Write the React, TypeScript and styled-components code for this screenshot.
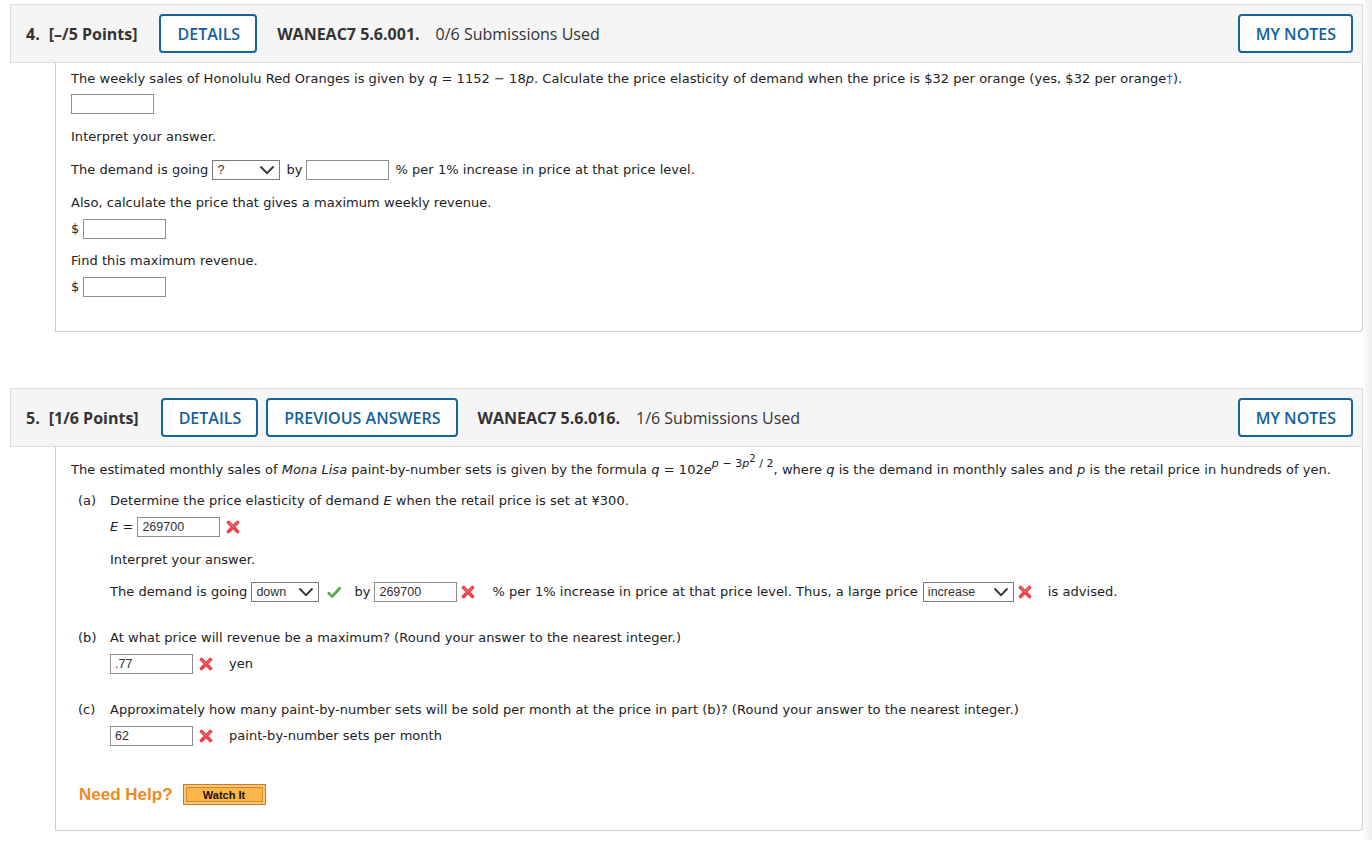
import React from 'react'
import styled, { createGlobalStyle } from 'styled-components'

const GlobalStyle = createGlobalStyle`
  html, body {
    margin: 0;
    padding: 0;
    background: #fff;
  }
  body {
    font-family: 'DejaVu Sans', Verdana, sans-serif;
    color: #222;
  }
`

const Page = styled.div`
  padding: 4px 9px 0 10px;
  min-height: 840px;
  box-sizing: border-box;
  background: linear-gradient(to right, #fff calc(100% - 10px), #ececec 100%);
`

const Question = styled.section<{ $gap?: number }>`
  margin-top: ${(p) => p.$gap ?? 0}px;
`

const Header = styled.div`
  display: flex;
  align-items: center;
  height: 57px;
  padding: 0 9px 0 15px;
  background: #f5f5f5;
  border: 1px solid #dcdcdc;
  font-family: 'Open Sans', 'Liberation Sans', sans-serif;
  font-size: 16px;
  color: #333;
`

const Num = styled.span`
  font-weight: 700;
  margin-right: 9px;
`

const Points = styled.span`
  font-weight: 700;
  margin-right: 22px;
`

const OutlineButton = styled.button<{ $mr?: number }>`
  height: 39px;
  padding: 0 15px 0 16px;
  margin-right: ${(p) => p.$mr ?? 20}px;
  background: #fff;
  border: 2px solid #15669b;
  border-radius: 4px;
  color: #15609a;
  font-family: 'Open Sans', 'Liberation Sans', sans-serif;
  font-size: 16px;
  font-weight: 600;
  cursor: pointer;
  &:last-child {
    margin-right: 0;
  }
`

const Code = styled.span`
  font-weight: 700;
  margin-right: 16px;
`

const Subs = styled.span`
  flex: 1;
`

const Body = styled.div<{ $pt: number; $pb: number }>`
  margin-left: 45px;
  padding: ${(p) => p.$pt}px 15px ${(p) => p.$pb}px 15px;
  border: 1px solid #cfcfcf;
  border-top: none;
  border-radius: 0 0 4px 0;
  font-size: 13px;
  letter-spacing: 0.04px;
`

const Line = styled.div<{ $mt?: number; $h?: number }>`
  margin-top: ${(p) => p.$mt ?? 0}px;
  height: ${(p) => p.$h ?? 16}px;
  line-height: ${(p) => p.$h ?? 16}px;
  white-space: nowrap;
  display: flex;
  align-items: center;
`

const Box = styled.span<{ $w?: number }>`
  display: inline-flex;
  align-items: center;
  box-sizing: border-box;
  width: ${(p) => p.$w ?? 83}px;
  height: 20px;
  padding: 0 4px;
  border: 1px solid #8d8d8d;
  background: #fff;
  font-family: 'Liberation Sans', Arial, sans-serif;
  font-size: 12.5px;
  letter-spacing: 0;
  color: #333;
`

const SelectBox = styled(Box)`
  justify-content: space-between;
  padding: 0 4px 0 4px;
  border-color: #7a7a7a;
`

const Space = styled.span<{ $w: number }>`
  display: inline-block;
  width: ${(p) => p.$w}px;
`

const I = styled.i`
  font-style: italic;
`

const Sup = styled.span`
  position: relative;
  top: -6px;
  font-size: 11px;
  line-height: 0;
`

const SupSup = styled.span`
  position: relative;
  top: -5px;
  font-size: 10px;
`

const Dagger = styled.span`
  color: #2f5fe8;
`

const Parts = styled.div`
  padding-left: 7px;
`

const Part = styled.div<{ $mt?: number }>`
  margin-top: ${(p) => p.$mt ?? 0}px;
`

const Label = styled.span`
  display: inline-block;
  width: 32px;
`

const Indent = styled.div`
  padding-left: 32px;
`

const HelpRow = styled.div`
  margin-top: 38px;
  padding-left: 8px;
  display: flex;
  align-items: center;
  gap: 10px;
`

const HelpText = styled.span`
  font-family: 'Liberation Sans', Arial, sans-serif;
  font-size: 17px;
  font-weight: 700;
  letter-spacing: 0;
  color: #ef8a23;
`

const WatchButton = styled.button`
  width: 83px;
  height: 21px;
  padding: 0;
  background: #ffb547;
  border: 1px solid #d0782a;
  box-shadow: inset 0 0 0 2px #ffc870, inset 0 0 0 3px #c98a3a;
  font-family: 'Liberation Sans', Arial, sans-serif;
  font-size: 11px;
  font-weight: 700;
  color: #111;
`

const Chevron = () => (
  <svg width="16" height="10" viewBox="0 0 16 10">
    <path d="M1.5 1.5 L8 8.2 L14.5 1.5" fill="none" stroke="#333" strokeWidth="1.8" />
  </svg>
)

const Select = ({ value, w }: { value: string; w: number }) => (
  <SelectBox $w={w}>
    <span>{value}</span>
    <Chevron />
  </SelectBox>
)

const Mark = styled.svg`
  flex: none;
`

const XMark = () => (
  <Mark width="14" height="14" viewBox="0 0 14 14">
    <path d="M2.5 2.5 L11.5 11.5 M11.5 2.5 L2.5 11.5" stroke="#e8454c" strokeWidth="3.6" strokeLinecap="round" />
    <path d="M3 3 L7 7 M11 3 L7 7" stroke="#f27a7f" strokeWidth="1" strokeLinecap="round" />
  </Mark>
)

const Check = () => (
  <Mark width="14" height="13" viewBox="0 0 14 13">
    <path d="M1.8 7.2 L5.2 10.6 L12.6 2.2" fill="none" stroke="#55a84b" strokeWidth="2.8" strokeLinecap="round" strokeLinejoin="round" />
    <path d="M2.5 7.2 L5.2 9.8" fill="none" stroke="#8fd17f" strokeWidth="0.8" strokeLinecap="round" />
  </Mark>
)

export default function App() {
  return (
    <>
      <GlobalStyle />
      <Page>
        <Question>
          <Header>
            <Num>4.</Num>
            <Points>[–/5 Points]</Points>
            <OutlineButton>DETAILS</OutlineButton>
            <Code>WANEAC7 5.6.001.</Code>
            <Subs>0/6 Submissions Used</Subs>
            <OutlineButton>MY NOTES</OutlineButton>
          </Header>
          <Body $pt={8} $pb={34}>
            <Line>
              The weekly sales of Honolulu Red Oranges is given by&nbsp;<I>q</I>&nbsp;= 1152 − 18<I>p</I>. Calculate the
              price elasticity of demand when the price is $32 per orange (yes, $32 per orange<Dagger>†</Dagger>).
            </Line>
            <Line $mt={7} $h={20}>
              <Box />
            </Line>
            <Line $mt={15}>Interpret your answer.</Line>
            <Line $mt={15} $h={20}>
              The demand is going<Space $w={4} />
              <Select value="?" w={68} />
              <Space $w={6} />
              by<Space $w={4} />
              <Box />
              <Space $w={6} />% per 1% increase in price at that price level.
            </Line>
            <Line $mt={15}>Also, calculate the price that gives a maximum weekly revenue.</Line>
            <Line $mt={8} $h={20}>
              $<Space $w={4} />
              <Box />
            </Line>
            <Line $mt={14}>Find this maximum revenue.</Line>
            <Line $mt={8} $h={20}>
              $<Space $w={4} />
              <Box />
            </Line>
          </Body>
        </Question>

        <Question $gap={56}>
          <Header>
            <Num>5.</Num>
            <Points>[1/6 Points]</Points>
            <OutlineButton $mr={8}>DETAILS</OutlineButton>
            <OutlineButton>PREVIOUS ANSWERS</OutlineButton>
            <Code>WANEAC7 5.6.016.</Code>
            <Subs>1/6 Submissions Used</Subs>
            <OutlineButton>MY NOTES</OutlineButton>
          </Header>
          <Body $pt={15} $pb={25}>
            <Line>
              The estimated monthly sales of&nbsp;<I>Mona Lisa</I>&nbsp;paint-by-number sets is given by the formula&nbsp;
              <I>q</I>&nbsp;= 102<I>e</I>
              <Sup>
                <I>p</I> − 3<I>p</I>
                <SupSup>2</SupSup> / 2
              </Sup>
              , where&nbsp;<I>q</I>&nbsp;is the demand in monthly sales and&nbsp;<I>p</I>&nbsp;is the retail price in
              hundreds of yen.
            </Line>
            <Parts>
              <Part $mt={15}>
                <Line>
                  <Label>(a)</Label>Determine the price elasticity of demand&nbsp;<I>E</I>&nbsp;when the retail price is
                  set at ¥300.
                </Line>
                <Indent>
                  <Line $mt={8} $h={20}>
                    <I>E</I>&nbsp;=<Space $w={4} />
                    <Box>269700</Box>
                    <Space $w={6} />
                    <XMark />
                  </Line>
                  <Line $mt={15}>Interpret your answer.</Line>
                  <Line $mt={14} $h={20}>
                    The demand is going<Space $w={4} />
                    <Select value="down" w={68} />
                    <Space $w={8} />
                    <Check />
                    <Space $w={13} />
                    by<Space $w={4} />
                    <Box>269700</Box>
                    <Space $w={4} />
                    <XMark />
                    <Space $w={17} />% per 1% increase in price at that price level. Thus, a large price
                    <Space $w={5} />
                    <Select value="increase" w={91} />
                    <Space $w={4} />
                    <XMark />
                    <Space $w={16} />
                    is advised.
                  </Line>
                </Indent>
              </Part>
              <Part $mt={28}>
                <Line>
                  <Label>(b)</Label>At what price will revenue be a maximum? (Round your answer to the nearest integer.)
                </Line>
                <Indent>
                  <Line $mt={8} $h={20}>
                    <Box>.77</Box>
                    <Space $w={6} />
                    <XMark />
                    <Space $w={16} />
                    yen
                  </Line>
                </Indent>
              </Part>
              <Part $mt={28}>
                <Line>
                  <Label>(c)</Label>Approximately how many paint-by-number sets will be sold per month at the price in
                  part (b)? (Round your answer to the nearest integer.)
                </Line>
                <Indent>
                  <Line $mt={8} $h={20}>
                    <Box>62</Box>
                    <Space $w={6} />
                    <XMark />
                    <Space $w={16} />
                    paint-by-number sets per month
                  </Line>
                </Indent>
              </Part>
            </Parts>
            <HelpRow>
              <HelpText>Need Help?</HelpText>
              <WatchButton>Watch It</WatchButton>
            </HelpRow>
          </Body>
        </Question>
      </Page>
    </>
  )
}
